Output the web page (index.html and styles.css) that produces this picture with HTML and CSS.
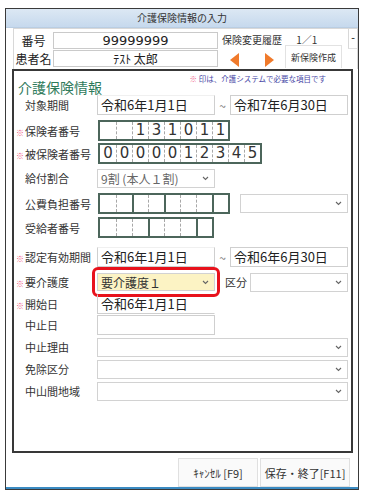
FILE: index.html
```html
<!DOCTYPE html>
<html lang="ja">
<head>
  <meta charset="UTF-8">
  <meta name="viewport" content="width=device-width, initial-scale=1.0">
  <title>介護保険情報の入力</title>
  <link rel="stylesheet" href="styles.css">
</head>
<body>
  <div class="window">
    <div class="titlebar">介護保険情報の入力</div>

    <!-- patient / history header -->
    <div class="header">
      <div class="patient">
        <span class="h-label">番号</span>
        <div class="h-input num">99999999</div>
        <span class="h-label">患者名</span>
        <div class="h-input name">ﾃｽﾄ 太郎</div>
      </div>
      <div class="history">
        <div class="history-top">
          <span>保険変更履歴</span>
          <span class="history-count">1／1</span>
        </div>
        <div class="history-nav">
          <span class="arrow prev"></span>
          <span class="arrow next"></span>
          <button class="new-btn">新保険作成</button>
        </div>
      </div>
      <div class="collapse">-</div>
    </div>

    <div class="panel">
      <div class="panel-head">
        <h2>介護保険情報</h2>
        <p class="note"><span class="mark">※</span> 印は、介護システムで必要な項目です</p>
      </div>

      <div class="row mt0">
        <label class="lbl">対象期間</label>
        <div class="field date from">令和6年1月1日</div>
        <span class="tilde">~</span>
        <div class="field date">令和7年6月30日</div>
      </div>

      <div class="row digits-row mt5">
        <label class="lbl req">保険者番号</label>
        <div class="digits">
          <span class="cell"></span><span class="cell"></span><span class="cell">1</span><span class="cell">3</span><span class="cell">1</span><span class="cell">0</span><span class="cell">1</span><span class="cell">1</span>
        </div>
      </div>

      <div class="row digits-row">
        <label class="lbl req">被保険者番号</label>
        <div class="digits">
          <span class="cell">0</span><span class="cell">0</span><span class="cell">0</span><span class="cell">0</span><span class="cell">0</span><span class="cell">1</span><span class="cell">2</span><span class="cell">3</span><span class="cell">4</span><span class="cell">5</span>
        </div>
      </div>

      <div class="row mt4">
        <label class="lbl">給付割合</label>
        <div class="select short muted">9割 (本人１割)<svg width="7" height="5" viewBox="0 0 7 5"><path d="M1 1l2.5 2.5L6 1" fill="none" stroke="#666" stroke-width="1.1"/></svg></div>
      </div>

      <div class="row digits-row mt5">
        <label class="lbl">公費負担番号</label>
        <div class="digits">
          <span class="cell"></span><span class="cell"></span><span class="cell gs"></span><span class="cell"></span><span class="cell gs"></span><span class="cell"></span><span class="cell"></span><span class="cell gs"></span>
        </div>
        <div class="select kohi"><svg width="7" height="5" viewBox="0 0 7 5"><path d="M1 1l2.5 2.5L6 1" fill="none" stroke="#666" stroke-width="1.1"/></svg></div>
      </div>

      <div class="row digits-row mt3">
        <label class="lbl">受給者番号</label>
        <div class="digits">
          <span class="cell"></span><span class="cell"></span><span class="cell"></span><span class="cell gs"></span><span class="cell"></span><span class="cell"></span><span class="cell gs"></span>
        </div>
      </div>

      <div class="row mt9">
        <label class="lbl req">認定有効期間</label>
        <div class="field date from">令和6年1月1日</div>
        <span class="tilde">~</span>
        <div class="field date">令和6年6月30日</div>
      </div>

      <div class="row mt5">
        <label class="lbl req">要介護度</label>
        <div class="highlight">
          <div class="select short care">要介護度１<svg width="7" height="5" viewBox="0 0 7 5"><path d="M1 1l2.5 2.5L6 1" fill="none" stroke="#666" stroke-width="1.1"/></svg></div>
        </div>
        <span class="sub-lbl">区分</span>
        <div class="select wide"><svg width="7" height="5" viewBox="0 0 7 5"><path d="M1 1l2.5 2.5L6 1" fill="none" stroke="#666" stroke-width="1.1"/></svg></div>
      </div>

      <div class="row">
        <label class="lbl req">開始日</label>
        <div class="field date from open">令和6年1月1日</div>
      </div>

      <div class="row mt1">
        <label class="lbl">中止日</label>
        <div class="field date"></div>
      </div>

      <div class="row">
        <label class="lbl">中止理由</label>
        <div class="select wide"><svg width="7" height="5" viewBox="0 0 7 5"><path d="M1 1l2.5 2.5L6 1" fill="none" stroke="#666" stroke-width="1.1"/></svg></div>
      </div>

      <div class="row">
        <label class="lbl">免除区分</label>
        <div class="select wide"><svg width="7" height="5" viewBox="0 0 7 5"><path d="M1 1l2.5 2.5L6 1" fill="none" stroke="#666" stroke-width="1.1"/></svg></div>
      </div>

      <div class="row">
        <label class="lbl">中山間地域</label>
        <div class="select wide"><svg width="7" height="5" viewBox="0 0 7 5"><path d="M1 1l2.5 2.5L6 1" fill="none" stroke="#666" stroke-width="1.1"/></svg></div>
      </div>
    </div>

    <div class="footer">
      <button class="btn cancel">ｷｬﾝｾﾙ [F9]</button>
      <button class="btn save">保存・終了[F11]</button>
    </div>
  </div>
</body>
</html>
```

FILE: styles.css
```css
* {
    box-sizing: border-box;
}

body {
    margin: 0;
    background: #fff;
    color: #333;
    font-family: "Noto Sans CJK JP", "Noto Sans", sans-serif;
}

.window {
    width: 354px;
    height: 482px;
    margin: 8px 0 0 5px;
    border: 1px solid #3a3a3a;
    display: flex;
    flex-direction: column;
}

.titlebar {
    height: 19px;
    flex: none;
    background: linear-gradient(to bottom, #dce8f4, #c6d9ed);
    border-bottom: 1px solid #b9cde2;
    font-size: 10px;
    line-height: 18px;
    text-align: center;
    color: #333;
}

/* header with patient number / name */
.header {
    height: 41px;
    flex: none;
    margin-left: 7px;
    border: 1px solid #d8d8d8;
    border-bottom: none;
    display: flex;
}

.patient {
    display: grid;
    grid-template-columns: 39px 165px;
    grid-auto-rows: 17px;
    row-gap: 1px;
    padding-top: 3px;
}

.h-label {
    font-size: 12px;
    line-height: 17px;
    text-align: center;
    color: #222;
}

.h-input {
    border: 1px solid #cacaca;
    text-align: center;
    color: #222;
    overflow: hidden;
}

.h-input.num {
    font-family: "DejaVu Sans", sans-serif;
    font-size: 13px;
    line-height: 15px;
}

.h-input.name {
    font-size: 12px;
    line-height: 15px;
}

.history {
    margin-left: 4px;
    width: 120px;
}

.history-top {
    height: 16px;
    padding-top: 5px;
    font-size: 10px;
    line-height: 12px;
    color: #333;
}

.history-count {
    margin-left: 12px;
}

.history-nav {
    display: flex;
    align-items: center;
    height: 23px;
}

.arrow {
    width: 0;
    height: 0;
    margin-top: 6px;
    border-top: 7px solid transparent;
    border-bottom: 7px solid transparent;
}

.arrow.prev {
    margin-left: 8px;
    border-right: 9px solid #f07a2b;
}

.arrow.next {
    margin-left: 26px;
    border-left: 9px solid #f07a2b;
}

.new-btn {
    margin-left: 11px;
    width: 57px;
    height: 23px;
    padding: 0;
    background: #fff;
    border: 1px solid #e2e2e2;
    border-bottom: none;
    font-family: inherit;
    font-size: 9px;
    color: #333;
}

.collapse {
    margin-left: auto;
    width: 9px;
    height: 20px;
    border-left: 1px solid #d8d8d8;
    border-bottom: 1px solid #e2e2e2;
    font-size: 10px;
    font-weight: bold;
    line-height: 16px;
    text-align: center;
    color: #444;
}

/* main form panel */
.panel {
    width: 341px;
    height: 384px;
    flex: none;
    margin-left: 6px;
    border: 2px solid #383838;
    padding-right: 3px;
}

.panel-head {
    height: 24px;
    display: flex;
    justify-content: space-between;
    align-items: flex-start;
}

.panel-head h2 {
    margin: 8px 0 0 4px;
    font-size: 14px;
    line-height: 17px;
    font-weight: normal;
    color: #2f7b5b;
}

.note {
    margin: 3px 22px 0 0;
    font-size: 7.5px;
    line-height: 10px;
    color: #4848a6;
}

.note .mark {
    color: #f0648a;
}

.row {
    display: flex;
    align-items: center;
    height: 20px;
    margin-top: 2px;
}

.row.digits-row {
    height: 21px;
}

.mt0 { margin-top: 0; }
.mt1 { margin-top: 1px; }
.mt3 { margin-top: 3px; }
.mt4 { margin-top: 4px; }
.mt5 { margin-top: 5px; }
.mt9 { margin-top: 9px; }

.lbl {
    width: 83px;
    flex: none;
    padding-left: 11px;
    font-size: 11px;
    color: #333;
    white-space: nowrap;
}

.lbl.req {
    padding-left: 2px;
}

.lbl.req::before {
    content: "※";
    display: inline-block;
    width: 9px;
    font-size: 8px;
    color: #f0527a;
}

.field {
    height: 20px;
    border: 1px solid #cfcfcf;
    padding-left: 3px;
    font-size: 13px;
    line-height: 18px;
    color: #222;
    white-space: nowrap;
}

.field.date {
    width: 118px;
}

.field.from {
    border-top-color: #f0f0f0;
}

.field.open {
    border-top-color: transparent;
    border-right-color: transparent;
}

.tilde {
    width: 15px;
    text-align: center;
    font-size: 12px;
    color: #777;
}

/* boxed number input, .gs starts a new group */
.digits {
    display: flex;
    flex: none;
    height: 21px;
    margin-left: 1px;
    border: 2px solid #4c665b;
}

.cell {
    display: block;
    width: 16px;
    height: 17px;
    font-family: "DejaVu Sans", sans-serif;
    font-size: 15px;
    line-height: 17px;
    text-align: center;
    color: #333;
}

.cell + .cell {
    border-left: 1px dashed #a8a8a8;
}

.cell.gs {
    border-left: 2px solid #4c665b;
}

/* dropdowns */
.select {
    height: 19px;
    border: 1px solid #d2d2d2;
    padding: 0 5px 0 3px;
    display: flex;
    align-items: center;
    justify-content: space-between;
    font-size: 12px;
    color: #333;
    white-space: nowrap;
}

.select svg {
    margin-left: auto;
}

.select.short {
    width: 118px;
}

.select.muted {
    color: #666;
}

.select.kohi {
    width: 108px;
    margin-left: auto;
}

.select.wide {
    flex: 1;
}

.select.care {
    height: 18px;
    background: #fcf3c4;
}

.highlight {
    margin: -6px -5px -6px -5px;
    padding: 3px 2px;
    border: 3px solid #e8121c;
    border-radius: 6px;
}

.sub-lbl {
    margin: 0 3px 0 10px;
    font-size: 11px;
    color: #333;
}

.footer {
    height: 36px;
    flex: none;
    display: flex;
    justify-content: flex-end;
    gap: 2px;
    padding: 5px 8px 0 0;
    border-bottom: 2px solid #3b8bc2;
}

.btn {
    height: 29px;
    padding: 0;
    background: #fafafa;
    border: 1px solid #e0e0e0;
    font-family: inherit;
    font-size: 11px;
    color: #333;
}

.btn.cancel {
    width: 80px;
}

.btn.save {
    width: 90px;
}
```
